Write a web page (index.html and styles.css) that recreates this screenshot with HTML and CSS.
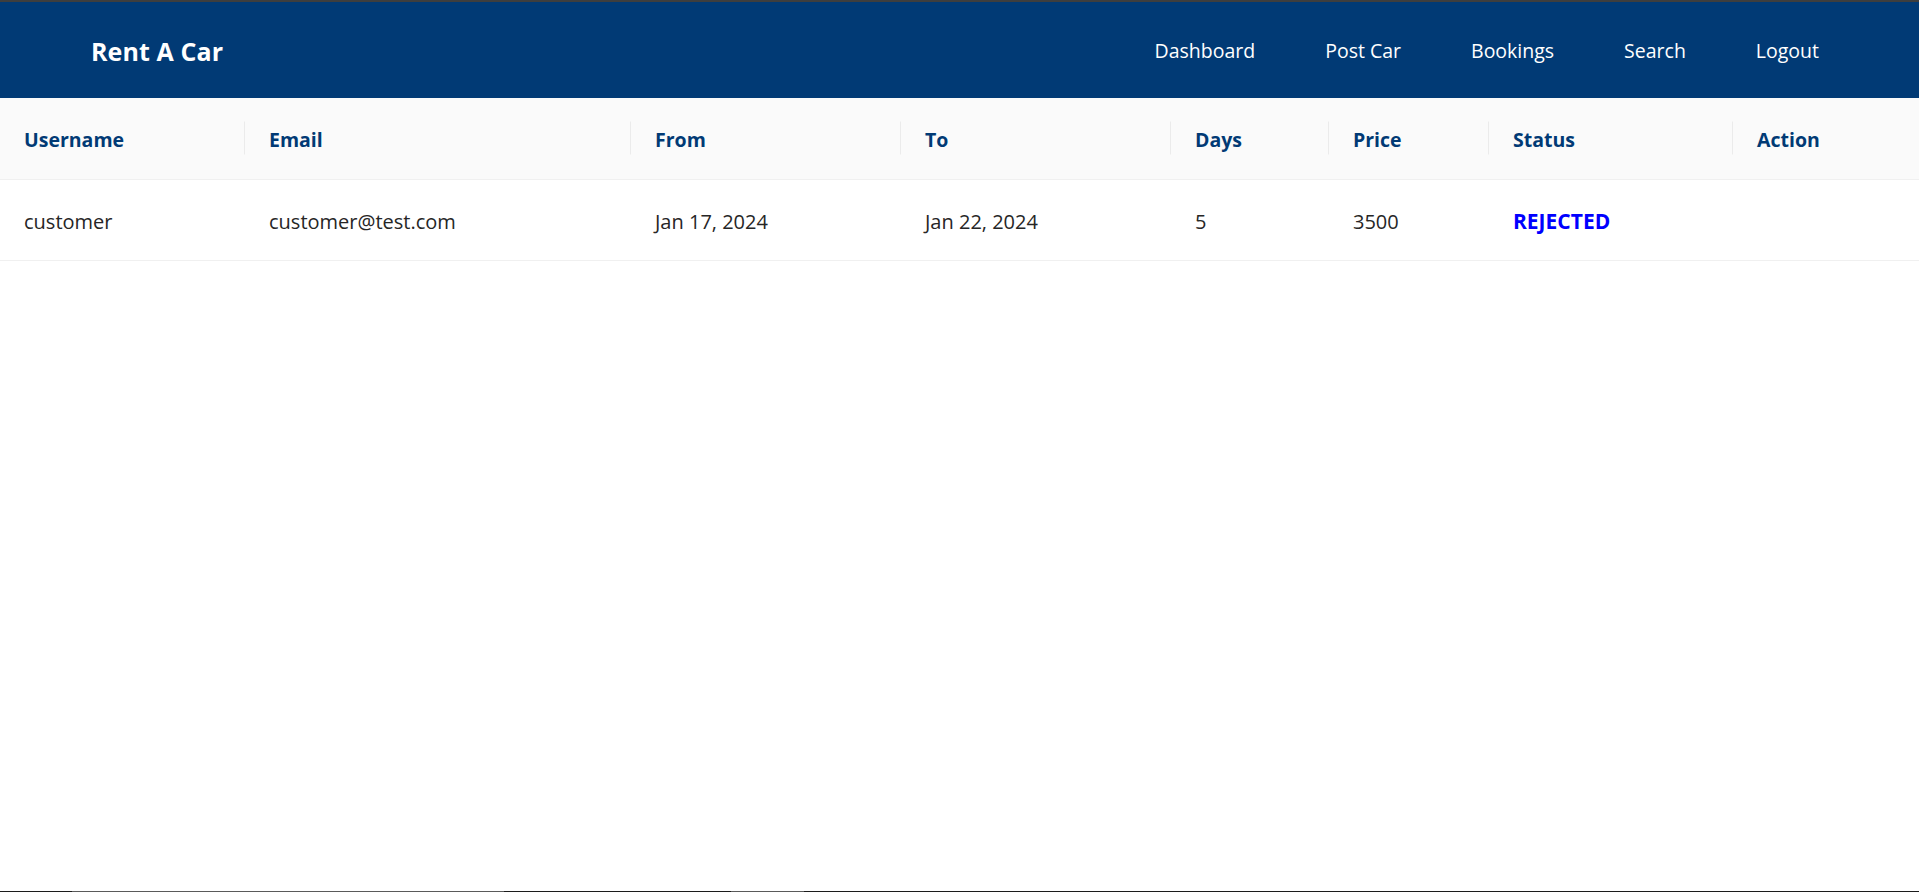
FILE: index.html
```html
<!DOCTYPE html>
<html lang="en">
<head>
<meta charset="utf-8">
<title>Rent A Car</title>
<link rel="stylesheet" href="styles.css">
</head>
<body>
<div class="page">
  <div class="topline"></div>
  <header class="header">
    <div class="brand">Rent A Car</div>
    <nav class="menu">
      <a class="menu-item" href="#">Dashboard</a>
      <a class="menu-item" href="#">Post Car</a>
      <a class="menu-item" href="#">Bookings</a>
      <a class="menu-item" href="#">Search</a>
      <a class="menu-item" href="#">Logout</a>
    </nav>
  </header>
  <main class="content">
    <table class="table">
      <colgroup>
        <col class="c-user">
        <col class="c-email">
        <col class="c-from">
        <col class="c-to">
        <col class="c-days">
        <col class="c-price">
        <col class="c-status">
        <col class="c-action">
      </colgroup>
      <thead>
        <tr>
          <th>Username</th>
          <th>Email</th>
          <th>From</th>
          <th>To</th>
          <th>Days</th>
          <th>Price</th>
          <th>Status</th>
          <th>Action</th>
        </tr>
      </thead>
      <tbody>
        <tr>
          <td>customer</td>
          <td>customer@test.com</td>
          <td>Jan 17, 2024</td>
          <td>Jan 22, 2024</td>
          <td>5</td>
          <td>3500</td>
          <td><span class="status rejected">REJECTED</span></td>
          <td></td>
        </tr>
      </tbody>
    </table>
  </main>
  <div class="bottomline">
    <span class="seg seg-a"></span>
    <span class="seg seg-b"></span>
    <span class="seg seg-c"></span>
    <span class="seg seg-d"></span>
  </div>
</div>
</body>
</html>
```

FILE: styles.css
```css
* {
  box-sizing: border-box;
}

html, body {
  margin: 0;
  padding: 0;
  height: 100%;
  background: #ffffff;
}

body {
  font-family: "Segoe UI", "Open Sans", "Noto Sans", sans-serif;
  color: #262626;
  font-size: 20px;
}

.page {
  min-height: 100vh;
  display: flex;
  flex-direction: column;
}

.topline {
  height: 2px;
  background: #3e3e3e;
  flex: none;
}

.header {
  flex: none;
  height: 96px;
  background: #013a75;
  display: flex;
  align-items: center;
  padding: 2px 65px 0 91px;
}

.brand {
  color: #ffffff;
  font-weight: 700;
  font-size: 25px;
  line-height: 1;
  letter-spacing: 0.1px;
}

.menu {
  margin-left: auto;
  display: flex;
  align-items: center;
  height: 100%;
}

.menu-item {
  color: #ffffff;
  text-decoration: none;
  font-size: 19.5px;
  padding: 0 35px;
  line-height: 1;
}

.content {
  flex: 1;
}

.table {
  width: 100%;
  border-collapse: collapse;
  table-layout: fixed;
}

.c-user { width: 244px; }
.c-email { width: 386px; }
.c-from { width: 270px; }
.c-to { width: 270px; }
.c-days { width: 158px; }
.c-price { width: 160px; }
.c-status { width: 244px; }
.c-action { width: 187px; }

.table th,
.table td {
  text-align: left;
  padding: 3px 24px 0 25px;
  height: 81px;
  line-height: 33px;
  border-bottom: 1px solid #f0f0f0;
  white-space: nowrap;
  overflow: hidden;
}

.table th {
  background: #fafafa;
  color: #013a75;
  font-weight: 700;
  font-size: 19.5px;
  position: relative;
}

.table th:first-child,
.table td:first-child {
  padding-left: 24px;
}

.table th + th::before {
  content: "";
  position: absolute;
  left: 0;
  top: 50%;
  width: 1px;
  height: 33px;
  transform: translateY(-50%);
  background: rgba(0, 0, 0, 0.06);
}

.table td {
  color: #262626;
}

.status {
  font-weight: 700;
  font-size: 21px;
}

.rejected {
  color: #0000ff;
}

.bottomline {
  flex: none;
  height: 1px;
  background: #1c1c1c;
  display: flex;
}

.seg {
  height: 1px;
}

.seg-a { width: 72px; }
.seg-b { width: 432px; background: #5a5a5a; }
.seg-c { width: 227px; }
.seg-d { width: 73px; background: #5a5a5a; }
```
